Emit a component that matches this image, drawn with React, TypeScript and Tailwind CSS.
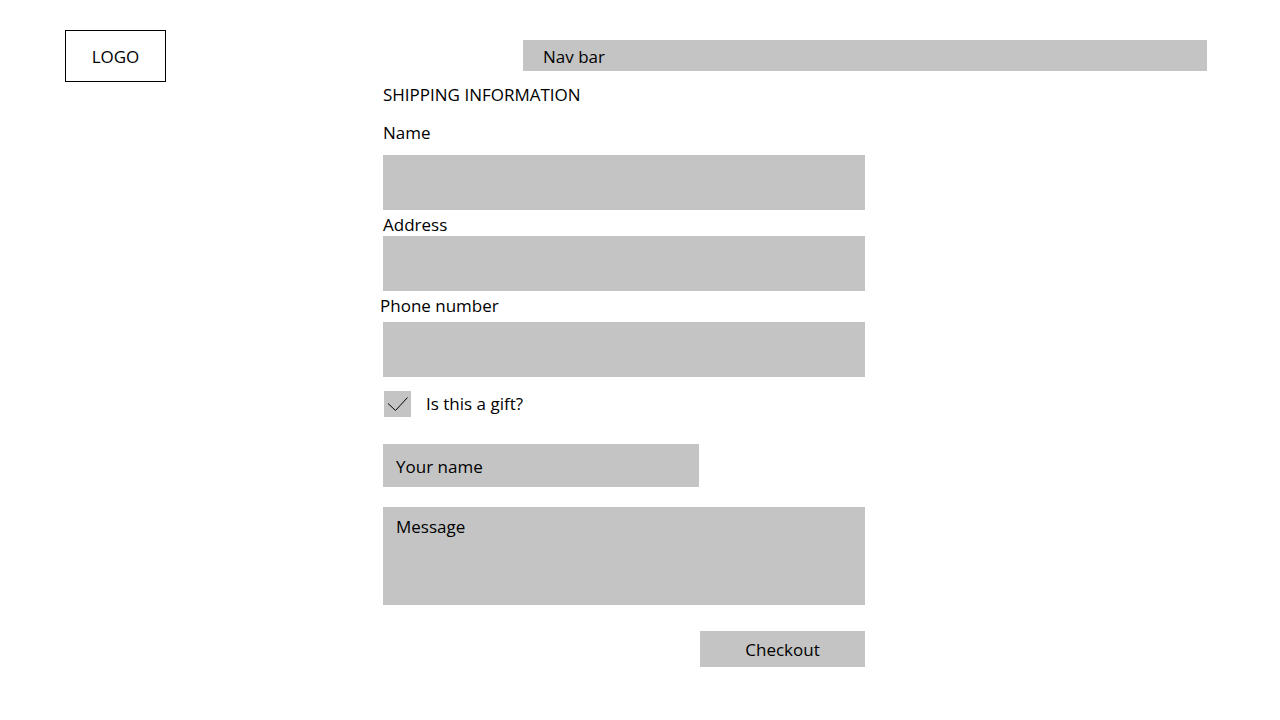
const field = "block h-[55px] w-full bg-[#c4c4c4] px-3";

export default function App() {
  return (
    <div className="min-h-screen bg-white pt-[30px] pb-10 font-['Open_Sans','Noto_Sans',sans-serif] text-[17px] leading-6 text-black">
      <header className="flex items-start justify-between pr-[73px] pl-[65px]">
        <a href="#" className="flex h-[52px] w-[101px] items-center justify-center border border-black pt-px">
          LOGO
        </a>
        <nav className="mt-[10px] flex h-[31px] w-3/5 max-w-[684px] items-center bg-[#c4c4c4] px-5 pt-[2px]">
          <a href="#">Nav bar</a>
        </nav>
      </header>

      <main className="pr-8">
        <form className="mx-auto w-full max-w-[482px]" onSubmit={(e) => e.preventDefault()}>
          <h1 className="pt-px">SHIPPING INFORMATION</h1>

          <label htmlFor="name" className="mt-[14px] mb-[10px] block">Name</label>
          <input id="name" type="text" className={field} />

          <label htmlFor="address" className="mt-[2px] block pt-px leading-[23px]">Address</label>
          <input id="address" type="text" className={field} />

          <label htmlFor="phone" className="mt-[2px] mb-[5px] -ml-[3px] block pt-px leading-[23px]">Phone number</label>
          <input id="phone" type="tel" className={field} />

          <label className="mt-[14px] ml-px flex items-center gap-[15px]">
            <span className="grid">
              <input
                type="checkbox"
                defaultChecked
                className="peer col-start-1 row-start-1 h-[26px] w-[27px] appearance-none bg-[#c4c4c4]"
              />
              <svg
                viewBox="0 0 27 26"
                className="pointer-events-none invisible col-start-1 row-start-1 h-[26px] w-[27px] peer-checked:visible"
                fill="none"
                stroke="black"
                aria-hidden="true"
              >
                <path d="M4 12.5L11.5 19.5L23.5 6.5" />
              </svg>
            </span>
            Is this a gift?
          </label>

          <input
            type="text"
            aria-label="Your name"
            placeholder="Your name"
            className="mt-[27px] block h-[43px] w-full max-w-[316px] bg-[#c4c4c4] px-[13px] pt-[2px] placeholder:text-black"
          />
          <textarea
            aria-label="Message"
            placeholder="Message"
            className="mt-5 block h-[98px] w-full resize-none bg-[#c4c4c4] px-[13px] py-2 placeholder:text-black"
          />
          <button type="submit" className="mt-[26px] ml-auto block h-9 w-[165px] bg-[#c4c4c4] pt-[2px]">
            Checkout
          </button>
        </form>
      </main>
    </div>
  );
}
